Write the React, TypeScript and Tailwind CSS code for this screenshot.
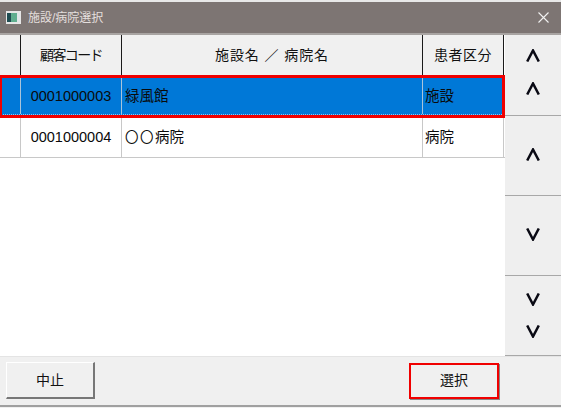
import React from 'react';

const font = "font-['Liberation_Sans','Noto_Sans_CJK_JP',sans-serif]";

const Chevron: React.FC<{ up?: boolean }> = ({ up }) => (
  <svg width="14" height="13" viewBox="0 0 14 13" className="block">
    <path d={up ? 'M1.2 12.5 L7 1.5 L12.8 12.5' : 'M1.2 0.5 L7 11.5 L12.8 0.5'} fill="none" stroke="#0a0a14" strokeWidth="2.5" />
  </svg>
);

const HeaderCell: React.FC<{ className?: string; children?: React.ReactNode }> = ({ className, children }) => (
  <div className={`flex items-center justify-center border-r border-b border-r-[#1a1a1a] border-b-[#c8c8c8] bg-[#f0f0f0] pt-[1px] text-[14px] text-[#111] ${className ?? ''}`}>
    {children}
  </div>
);

const ScrollButton: React.FC<{ className: string; children: React.ReactNode }> = ({ className, children }) => (
  <button className={`flex flex-col items-center justify-center border-b border-b-[#a8a8a8] bg-[#efefef] ${className}`}>{children}</button>
);

const Row: React.FC<{ code: string; name: React.ReactNode; kind: string }> = ({ code, name, kind }) => (
  <div className="grid h-[41px] grid-cols-[21px_101px_301px_81px] border-b border-b-[#c8c8c8] bg-white text-[14.5px] text-[#0a0a0a]">
    <div className="border-r border-r-[#c8c8c8]" />
    <div className="flex items-center justify-center border-r border-r-[#c8c8c8] pt-[2px]">{code}</div>
    <div className="flex items-center border-r border-r-[#c8c8c8] pt-[2px] pl-[3px]">{name}</div>
    <div className="flex items-center border-r border-r-[#c8c8c8] pt-[2px] pl-[2px]">{kind}</div>
  </div>
);

const SelectedRow: React.FC<{ code: string; name: string; kind: string }> = ({ code, name, kind }) => (
  <div className="relative h-[41px] w-[504px] bg-[#0078d7] text-[14.5px] text-[#0a0a0a] outline-[3px] -outline-offset-2 outline-[#f00000]">
    <div className="grid h-[39px] grid-cols-[21px_101px_301px_81px] border-b border-dotted border-b-[#8fc3ee]">
      <div className="border-r border-r-[#a9c4da]" />
      <div className="flex items-center justify-center border-r border-r-[#a9c4da] pt-[3px]">{code}</div>
      <div className="flex items-center border-r border-r-[#a9c4da] pt-[3px] pl-[3px]">{name}</div>
      <div className="flex items-center pt-[3px] pl-[2px]">{kind}</div>
    </div>
  </div>
);

export default function App() {
  return (
    <div className={`flex h-[408px] w-[561px] flex-col overflow-hidden bg-[#f0f0f0] ${font}`}>
      <div className="h-[2px] bg-[#e8e8e8]" />
      <div className="flex h-[31px] items-center bg-[#7d7573] pl-[6px] pr-[12px]">
        <svg width="15" height="13" viewBox="0 0 15 13" className="mr-[7px] block">
          <rect x="0" y="0" width="15" height="13" fill="#e6e6e6" />
          <rect x="1" y="2" width="4" height="9" fill="#1f4d52" />
          <rect x="5" y="2" width="6" height="9" fill="#5fae8f" />
          <rect x="11" y="2" width="3" height="9" fill="#dfe6e8" />
        </svg>
        <span className="text-[12px] text-[#e4dfdd]">施設/病院選択</span>
        <svg width="11" height="11" viewBox="0 0 11 11" className="ml-auto block">
          <path d="M0.5 0.5 L10.5 10.5 M10.5 0.5 L0.5 10.5" stroke="#f2f2f2" strokeWidth="1.1" />
        </svg>
      </div>
      <div className="h-[2px] bg-[#a8a4a2]" />
      <div className="flex h-[321px]">
        <div className="flex w-[505px] flex-col bg-white">
          <div className="grid h-[41px] grid-cols-[21px_101px_301px_81px]">
            <HeaderCell />
            <HeaderCell className="tracking-[-1.6px]">顧客コード</HeaderCell>
            <HeaderCell className="tracking-[0.9px]">施設名 ／ 病院名</HeaderCell>
            <HeaderCell className="tracking-[0.5px]">患者区分</HeaderCell>
          </div>
          <SelectedRow code="0001000003" name="緑風館" kind="施設" />
          <Row
            code="0001000004"
            name={
              <>
                <span className="text-[13.5px] tracking-[1.5px]">〇〇</span>
                病院
              </>
            }
            kind="病院"
          />
        </div>
        <div className="flex w-[56px] flex-col">
          <ScrollButton className="h-[81px] gap-[20px] pb-[7px]">
            <Chevron up />
            <Chevron up />
          </ScrollButton>
          <ScrollButton className="h-[80px] pb-[2px]">
            <Chevron up />
          </ScrollButton>
          <ScrollButton className="h-[80px] pb-[2px]">
            <Chevron />
          </ScrollButton>
          <ScrollButton className="h-[80px] gap-[19px]">
            <Chevron />
            <Chevron />
          </ScrollButton>
        </div>
      </div>
      <div className="flex h-[51px] items-center justify-between border-b-2 border-b-[#a0a0a0] pl-[6px] pr-[62px] [box-shadow:inset_0_1px_0_#e4e4e4]">
        <button className="h-[37px] w-[89px] border-t border-r-2 border-b-2 border-l border-t-white border-r-[#777] border-b-[#777] border-l-white bg-[#f0f0f0] text-[14px] text-[#111]">中止</button>
        <button className="h-[36px] w-[90px] border-2 border-[#f00000] bg-[#f0f0f0] text-[14px] text-[#111] shadow-[1px_1px_0_#888]">選択</button>
      </div>
    </div>
  );
}
